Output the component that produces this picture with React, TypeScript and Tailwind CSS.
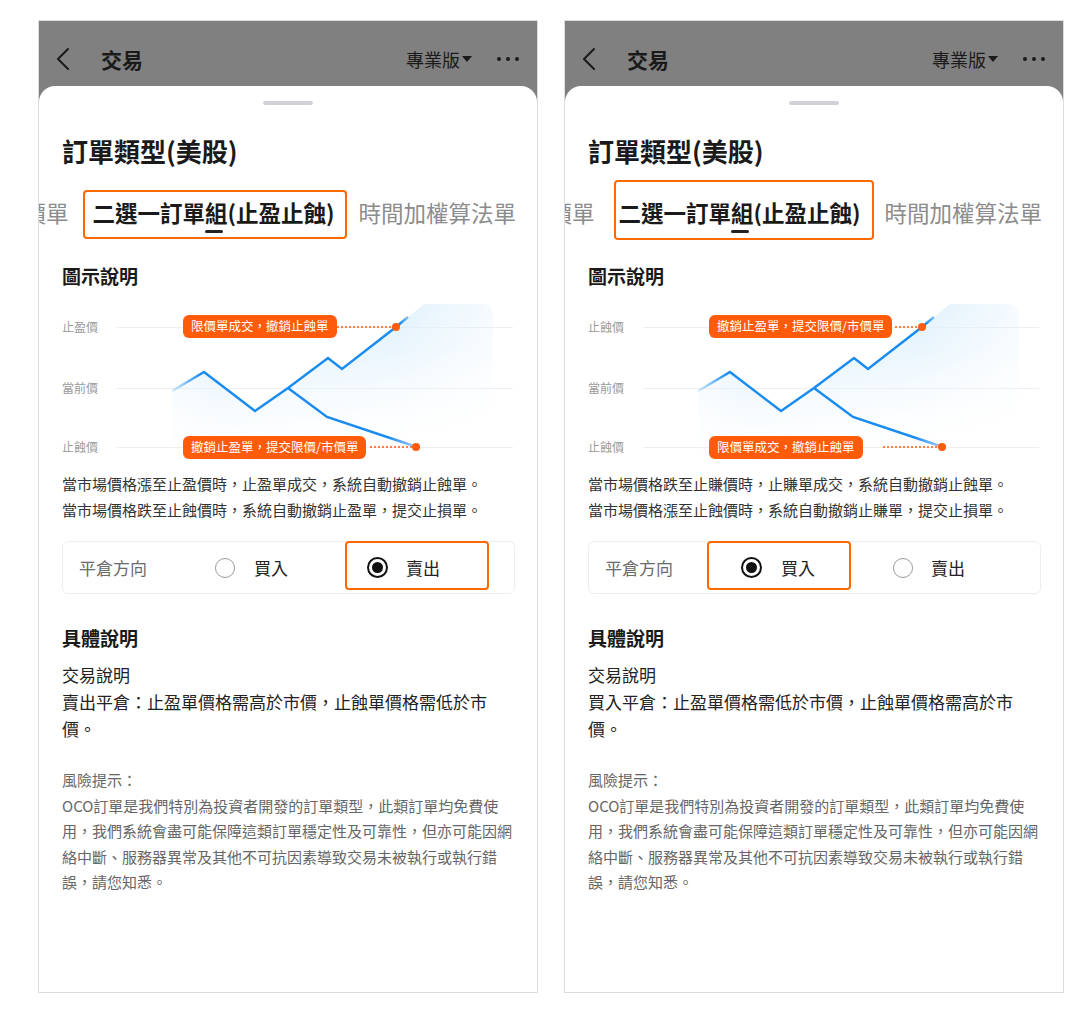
import React from 'react';

type Side = 'sell' | 'buy';

const sides = {
  sell: {
    labels: ['止盈價', '當前價', '止蝕價'],
    topPill: '限價單成交，撤銷止蝕單',
    topDash: [275, 330],
    bottomPill: '撤銷止盈單，提交限價/市價單',
    bottomDash: [308, 350],
    desc: [
      '當市場價格漲至止盈價時，止盈單成交，系統自動撤銷止蝕單。',
      '當市場價格跌至止蝕價時，系統自動撤銷止盈單，提交止損單。',
    ],
    body: ['賣出平倉：止盈單價格需高於市價，止蝕單價格需低於市', '價。'],
    tabBox: '-left-[10px] -right-[12px] -top-[7px] -bottom-[6px]',
    radioBox: 'left-[282px]',
  },
  buy: {
    labels: ['止蝕價', '當前價', '止蝕價'],
    topPill: '撤銷止盈單，提交限價/市價單',
    topDash: [307, 330],
    bottomPill: '限價單成交，撤銷止蝕單',
    bottomDash: [295, 350],
    desc: [
      '當市場價格跌至止賺價時，止賺單成交，系統自動撤銷止蝕單。',
      '當市場價格漲至止蝕價時，系統自動撤銷止賺單，提交止損單。',
    ],
    body: ['買入平倉：止盈單價格需低於市價，止蝕單價格需高於市', '價。'],
    tabBox: '-left-[5px] -right-[13px] -top-[17px] -bottom-[7px]',
    radioBox: 'left-[118px]',
  },
};

const risk = [
  'OCO訂單是我們特別為投資者開發的訂單類型，此類訂單均免費使',
  '用，我們系統會盡可能保障這類訂單穩定性及可靠性，但亦可能因網',
  '絡中斷、服務器異常及其他不可抗因素導致交易未被執行或執行錯',
  '誤，請您知悉。',
];

function Header() {
  return (
    <div className="h-[65px] shrink-0 flex items-center pt-[11px] pl-[17px] pr-[18px] text-[#1a1a1a]">
      <svg width="14" height="24" viewBox="0 0 14 24" fill="none">
        <polyline points="12,2 2,12 12,22" stroke="#1a1a1a" strokeWidth="2" strokeLinecap="round" strokeLinejoin="round" />
      </svg>
      <span className="ml-[31px] text-[21px] font-bold leading-none">交易</span>
      <div className="ml-auto flex items-center">
        <span className="text-[18px] leading-none">專業版</span>
        <svg className="ml-[2px]" width="10" height="6" viewBox="0 0 10 6">
          <polygon points="0,0 10,0 5,6" fill="#1a1a1a" />
        </svg>
      </div>
      <div className="ml-[25px] flex items-center gap-[5px]">
        <div className="w-[4px] h-[4px] rounded-full bg-[#1a1a1a]" />
        <div className="w-[4px] h-[4px] rounded-full bg-[#1a1a1a]" />
        <div className="w-[4px] h-[4px] rounded-full bg-[#1a1a1a]" />
      </div>
    </div>
  );
}

function Chart({ side }: { side: Side }) {
  const c = sides[side];
  return (
    <div className="relative h-[162px] mt-[12px]">
      {/* axis rows */}
      <div className="flex flex-col pt-4">
        {c.labels.map((l, i) => (
          <div
            key={i}
            className={`flex items-center h-5 ${i === 1 ? 'mt-[41px]' : i === 2 ? 'mt-[39px]' : ''}`}
          >
            <span className="w-[55px] text-[12px] text-[#9a9a9a]">{l}</span>
            <div className="w-[396px] h-px bg-[#eeeeee]" />
          </div>
        ))}
      </div>

      <svg className="absolute inset-0" width="453" height="162" viewBox="0 0 453 162">
        <defs>
          <linearGradient id={`wash-${side}`} x1="0" y1="0" x2="0.25" y2="1">
            <stop offset="0" stopColor="#d6ecfb" stopOpacity="0.9" />
            <stop offset="0.45" stopColor="#e2f2fc" stopOpacity="0.7" />
            <stop offset="1" stopColor="#f6fbfe" stopOpacity="0" />
          </linearGradient>
          <linearGradient id={`fade-${side}`} x1="0" y1="0" x2="1" y2="0">
            <stop offset="0" stopColor="#fff" stopOpacity="0.4" />
            <stop offset="0.15" stopColor="#fff" stopOpacity="1" />
            <stop offset="0.7" stopColor="#fff" stopOpacity="1" />
            <stop offset="1" stopColor="#fff" stopOpacity="0.35" />
          </linearGradient>
          <mask id={`mask-${side}`}>
            <rect x="110" y="0" width="321" height="162" fill={`url(#fade-${side})`} />
          </mask>
          <linearGradient id={`up-${side}`} gradientUnits="userSpaceOnUse" x1="110" y1="0" x2="350" y2="0">
            <stop offset="0" stopColor="#1a8cf0" stopOpacity="0.15" />
            <stop offset="0.12" stopColor="#1a8cf0" stopOpacity="1" />
            <stop offset="0.95" stopColor="#1a8cf0" stopOpacity="1" />
            <stop offset="1" stopColor="#1a8cf0" stopOpacity="0.25" />
          </linearGradient>
          <linearGradient id={`down-${side}`} gradientUnits="userSpaceOnUse" x1="226" y1="0" x2="352" y2="0">
            <stop offset="0" stopColor="#1a8cf0" stopOpacity="1" />
            <stop offset="0.8" stopColor="#1a8cf0" stopOpacity="1" />
            <stop offset="1" stopColor="#1a8cf0" stopOpacity="0.45" />
          </linearGradient>
        </defs>
        <path
          d="M110 90 L142 71 L193 110 L226 87 L266 57 L280 68 L334 26 L362 3 L419 3 Q431 3 431 15 L431 160 L110 160 Z"
          fill={`url(#wash-${side})`}
          mask={`url(#mask-${side})`}
        />
        <path
          d="M110 90 L142 71 L193 110 L226 87 L266 57 L280 68 L334 26 L346 16"
          fill="none"
          stroke={`url(#up-${side})`}
          strokeWidth="2.5"
        />
        <path d="M226 87 L265 116 L352 145" fill="none" stroke={`url(#down-${side})`} strokeWidth="2.5" />
        <line x1={c.topDash[0]} y1="26" x2={c.topDash[1]} y2="26" stroke="#ff5b0a" strokeWidth="1.3" strokeDasharray="2 2" />
        <line x1={c.bottomDash[0]} y1="146" x2={c.bottomDash[1]} y2="146" stroke="#ff5b0a" strokeWidth="1.3" strokeDasharray="2 2" />
        <circle cx="334" cy="26" r="4" fill="#ff5b0a" />
        <circle cx="354" cy="146" r="4" fill="#ff5b0a" />
      </svg>

      <div className="absolute left-[121px] top-[14px] h-[23px] px-2 rounded-[6px] bg-[#ff5b0a] text-white text-[12.5px] flex items-center whitespace-nowrap">
        {c.topPill}
      </div>
      <div className="absolute left-[121px] top-[135px] h-[23px] px-2 rounded-[6px] bg-[#ff5b0a] text-white text-[12.5px] flex items-center whitespace-nowrap">
        {c.bottomPill}
      </div>
    </div>
  );
}

function Radio({ checked }: { checked: boolean }) {
  return checked ? (
    <div className="w-[21px] h-[21px] rounded-full border-2 border-[#111] flex items-center justify-center">
      <div className="w-[11px] h-[11px] rounded-full bg-[#111]" />
    </div>
  ) : (
    <div className="w-[20px] h-[20px] rounded-full border-[1.5px] border-[#9a9a9a]" />
  );
}

function Phone({ side }: { side: Side }) {
  const c = sides[side];
  return (
    <div className="w-[500px] h-[973px] border border-[#dcdcdc] bg-[#808080] flex flex-col overflow-hidden">
      <Header />
      <div className="flex-1 bg-white rounded-t-[16px] flex flex-col">
        <div className="mt-[15px] mx-auto w-[50px] h-[4px] rounded-full bg-[#d1d1d6]" />

        <h1 className="mt-[28px] pl-[23px] text-[26px] font-bold leading-[36px] text-[#1a1a1a]">訂單類型(美股)</h1>

        {/* tabs */}
        <div className="mt-[28px] overflow-x-clip">
          <div className="flex items-start gap-6 ml-[-38px] whitespace-nowrap text-[22.5px] leading-[30px]">
            <span className="shrink-0 text-[#8c8c8c]">限價單</span>
            <div className="relative shrink-0 flex flex-col items-center">
              <span className="font-bold text-[#1a1a1a]">二選一訂單組(止盈止蝕)</span>
              <div className="mt-[3px] w-[18px] h-[3px] rounded-full bg-[#222]" />
              <div className={`absolute ${c.tabBox} border-2 border-[#ff6a00] rounded-[4px]`} />
            </div>
            <span className="shrink-0 text-[#8c8c8c]">時間加權算法單</span>
          </div>
        </div>

        <div className="pl-[23px] pr-[22px] flex flex-col">
          <h2 className="mt-[30px] text-[19px] font-bold leading-[26px] text-[#1a1a1a]">圖示說明</h2>

          <Chart side={side} />

          <div className="mt-[8px] text-[15px] leading-[26px] text-[#333]">
            {c.desc.map(d => (
              <p key={d}>{d}</p>
            ))}
          </div>

          {/* close direction */}
          <div className="relative mt-[18px] h-[53px] border border-[#eeeeee] rounded-[6px] flex items-center pl-[16px] text-[17px]">
            <span className="w-[136px] text-[#6b6b6b]">平倉方向</span>
            <div className="w-[152px] flex items-center gap-[19px] text-[#222]">
              <Radio checked={side === 'buy'} />
              <span>買入</span>
            </div>
            <div className="flex items-center gap-[18px] text-[#222]">
              <Radio checked={side === 'sell'} />
              <span>賣出</span>
            </div>
            <div className={`absolute ${c.radioBox} top-[-1px] w-[144px] h-[49px] border-2 border-[#ff6a00] rounded-[4px]`} />
          </div>

          <h2 className="mt-[31px] text-[19px] font-bold leading-[26px] text-[#1a1a1a]">具體說明</h2>
          <div className="mt-[10px] text-[17px] leading-[27px] text-[#222]">
            <p>交易說明</p>
            {c.body.map(b => (
              <p key={b}>{b}</p>
            ))}
          </div>

          <div className="mt-[25px] text-[15px] leading-[25.5px] text-[#666]">
            <p>風險提示：</p>
            {risk.map(r => (
              <p key={r}>{r}</p>
            ))}
          </div>
        </div>
      </div>
    </div>
  );
}

export default function App() {
  return (
    <div className="w-[1067px] h-[1013px] bg-white pl-[38px] pt-[20px] flex gap-[26px] font-['Noto_Sans_CJK_TC','Noto_Sans_CJK_SC',sans-serif]">
      <Phone side="sell" />
      <Phone side="buy" />
    </div>
  );
}
